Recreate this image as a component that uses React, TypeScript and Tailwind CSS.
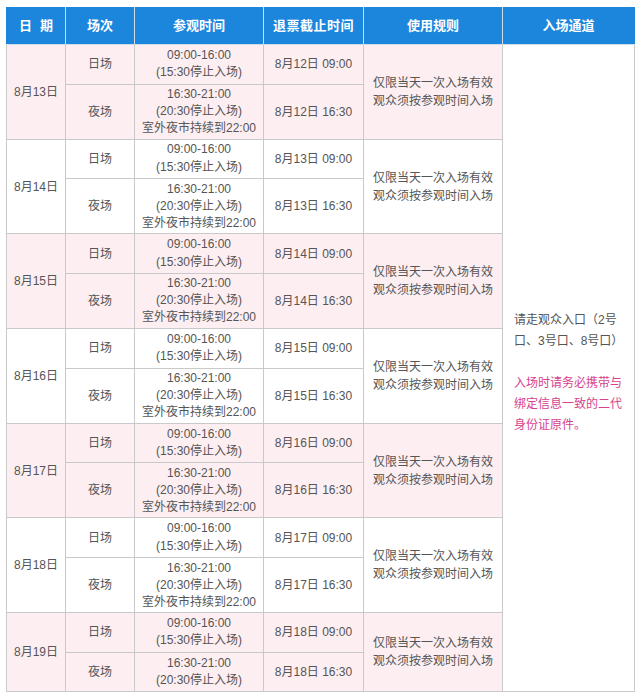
import React from "react";

const days = [13, 14, 15, 16, 17, 18, 19];

export default function App() {
  return (
    <div className="w-[640px] h-[699px] bg-white pt-[7px] pl-[6px]" style={{ fontFamily: '"Liberation Sans", "Noto Sans CJK SC", sans-serif' }}>
      <table className="table-fixed border-collapse w-[628px] text-[12px] text-[#555555]">
        <colgroup>
          <col className="w-[59px]" />
          <col className="w-[69px]" />
          <col className="w-[129px]" />
          <col className="w-[100px]" />
          <col className="w-[139px]" />
          <col className="w-[132px]" />
        </colgroup>
        <thead>
          <tr className="h-[37px] bg-[#1c86dd] text-white font-bold text-[13px]">
            <th className="border border-[#cfdcea] border-t-[#1c86dd] border-l-[#1c86dd] font-bold">
              日<span className="inline-block w-[8px]" />期
            </th>
            <th className="border border-[#cfdcea] border-t-[#1c86dd] font-bold">场次</th>
            <th className="border border-[#cfdcea] border-t-[#1c86dd] font-bold">参观时间</th>
            <th className="border border-[#cfdcea] border-t-[#1c86dd] font-bold tracking-[0.5px]">退票截止时间</th>
            <th className="border border-[#cfdcea] border-t-[#1c86dd] font-bold">使用规则</th>
            <th className="border border-[#cfdcea] border-t-[#1c86dd] border-r-[#1c86dd] font-bold">入场通道</th>
          </tr>
        </thead>
        <tbody>
          {days.map((d, i) => {
            const pink = i % 2 === 0;
            const bg = pink ? "bg-[#fdeef1]" : "bg-white";
            const last = i === days.length - 1;
            return (
              <React.Fragment key={d}>
                <tr className={`h-[39.5px] ${bg}`}>
                  <td rowSpan={2} className="border border-[#c9c9c9] text-center align-middle">
                    8月{d}日
                  </td>
                  <td className="border border-[#c9c9c9] text-center">日场</td>
                  <td className="border border-[#c9c9c9] text-center leading-[17.5px]">
                    09:00-16:00
                    <br />
                    (15:30停止入场)
                  </td>
                  <td className="border border-[#c9c9c9] text-center">
                    8月{d - 1}日 09:00
                  </td>
                  <td rowSpan={2} className="border border-[#c9c9c9] pl-[9px] leading-[18px] align-middle">
                    仅限当天一次入场有效
                    <br />
                    观众须按参观时间入场
                  </td>
                  {i === 0 && (
                    <td rowSpan={14} className="border border-[#c9c9c9] bg-white pl-[11px] pr-[4px] align-middle leading-[21px] text-[12px]">
                      <div className="pt-[10px]">
                        请走观众入口（2号
                        <br />
                        口、3号口、8号口）
                      </div>
                      <div className="mt-[21px] text-[#d6428e]">
                        入场时请务必携带与
                        <br />
                        绑定信息一致的二代
                        <br />
                        身份证原件。
                      </div>
                    </td>
                  )}
                </tr>
                <tr className={`${last ? "h-[39.3px]" : "h-[55.2px]"} ${bg}`}>
                  <td className="border border-[#c9c9c9] text-center">夜场</td>
                  <td className="border border-[#c9c9c9] text-center leading-[17px]">
                    16:30-21:00
                    <br />
                    (20:30停止入场)
                    {!last && (
                      <>
                        <br />
                        室外夜市持续到22:00
                      </>
                    )}
                  </td>
                  <td className="border border-[#c9c9c9] text-center">
                    8月{d - 1}日 16:30
                  </td>
                </tr>
              </React.Fragment>
            );
          })}
        </tbody>
      </table>
    </div>
  );
}
